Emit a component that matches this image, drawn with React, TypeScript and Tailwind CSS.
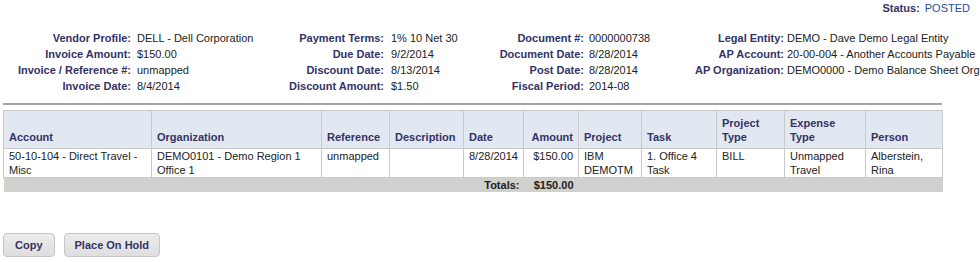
import React from 'react'

const fields: [string, string][][] = [
  [
    ['Vendor Profile:', 'DELL - Dell Corporation'],
    ['Payment Terms:', '1% 10 Net 30'],
    ['Document #:', '0000000738'],
    ['Legal Entity:', 'DEMO - Dave Demo Legal Entity'],
  ],
  [
    ['Invoice Amount:', '$150.00'],
    ['Due Date:', '9/2/2014'],
    ['Document Date:', '8/28/2014'],
    ['AP Account:', '20-00-004 - Another Accounts Payable'],
  ],
  [
    ['Invoice / Reference #:', 'unmapped'],
    ['Discount Date:', '8/13/2014'],
    ['Post Date:', '8/28/2014'],
    ['AP Organization:', 'DEMO0000 - Demo Balance Sheet Org'],
  ],
  [
    ['Invoice Date:', '8/4/2014'],
    ['Discount Amount:', '$1.50'],
    ['Fiscal Period:', '2014-08'],
  ],
]

const valuePad = ['pl-[6px]', 'pl-[7px]', 'pl-[5px]', 'pl-[3px]']

const columns = [
  { label: 'Account', width: 148 },
  { label: 'Organization', width: 170 },
  { label: 'Reference', width: 68 },
  { label: 'Description', width: 74 },
  { label: 'Date', width: 60 },
  { label: 'Amount', width: 55, right: true },
  { label: 'Project', width: 63 },
  { label: 'Task', width: 75 },
  { label: 'Project Type', width: 68 },
  { label: 'Expense Type', width: 81 },
  { label: 'Person', width: 77 },
]

const row = [
  '50-10-104 - Direct Travel - Misc',
  'DEMO0101 - Demo Region 1 Office 1',
  'unmapped',
  '',
  '8/28/2014',
  '$150.00',
  'IBM DEMOTM',
  '1. Office 4 Task',
  'BILL',
  'Unmapped Travel',
  'Alberstein, Rina',
]

export default function App() {
  return (
    <div className="w-[980px] h-[262px] bg-white font-['Liberation_Sans',Arial,sans-serif] text-[11px] text-[#222]">
      <div className="flex justify-end pr-[10px] h-[16px] leading-[16px]">
        <span className="font-bold text-[#333366]">Status:</span>
        <span className="ml-[5px] text-[#2a4d9c]">POSTED</span>
      </div>

      <div className="mt-[14px] grid grid-cols-[131px_149px_104px_96px_104px_96px_104px_1fr] leading-[16px]">
        {fields.map((line, i) => (
          <React.Fragment key={i}>
            {[0, 1, 2, 3].map((c) => {
              const f = line[c]
              return (
                <React.Fragment key={c}>
                  <div className="text-right font-bold text-[#333366] whitespace-nowrap">{f ? f[0] : ''}</div>
                  <div className={`${valuePad[c]} whitespace-nowrap`}>{f ? f[1] : ''}</div>
                </React.Fragment>
              )
            })}
          </React.Fragment>
        ))}
      </div>

      <div className="pl-[3px]">
        <div className="mt-[9px] w-[939px] border-t-2 border-[#a4a4a4]" />

        <table className="mt-[5px] w-[939px] table-fixed border-collapse">
          <colgroup>
            {columns.map((c) => (
              <col key={c.label} style={{ width: c.width }} />
            ))}
          </colgroup>
          <thead>
            <tr>
              {columns.map((c) => (
                <th
                  key={c.label}
                  className={`border border-[#c9c9c9] bg-[#e2e8f2] px-[5px] pt-[5px] pb-[4px] align-bottom leading-[14px] font-bold text-[#333366] ${
                    c.right ? 'text-right' : 'text-left'
                  }`}
                >
                  {c.label}
                </th>
              ))}
            </tr>
          </thead>
          <tbody>
            <tr>
              {row.map((v, i) => (
                <td
                  key={i}
                  className={`border border-[#c9c9c9] px-[5px] py-0 align-top leading-[14px] ${
                    columns[i].right ? 'text-right' : 'text-left'
                  }`}
                >
                  {v}
                </td>
              ))}
            </tr>
            <tr className="bg-[#d0d0cc] font-bold leading-[14px]">
              <td colSpan={5} className="text-right pr-[4px] py-0">
                Totals:
              </td>
              <td className="text-right px-[5px] py-0">$150.00</td>
              <td colSpan={5} />
            </tr>
          </tbody>
        </table>

        <div className="mt-[41px] flex gap-[9px]">
          <button className="h-[24px] px-[11px] rounded-[4px] border border-[#c6c6c6] bg-gradient-to-b from-[#ececec] to-[#dedede] font-bold text-[#333366]">
            Copy
          </button>
          <button className="h-[24px] px-[10px] rounded-[4px] border border-[#c6c6c6] bg-gradient-to-b from-[#ececec] to-[#dedede] font-bold text-[#333366]">
            Place On Hold
          </button>
        </div>
      </div>
    </div>
  )
}
